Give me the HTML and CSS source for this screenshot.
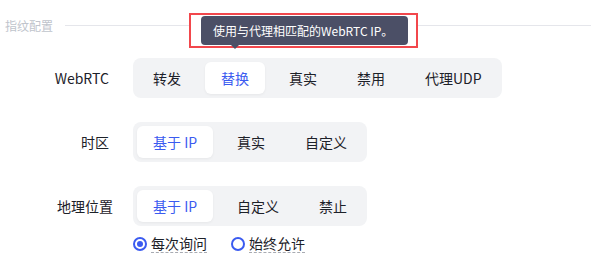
FILE: index.html
```html
<!DOCTYPE html>
<html lang="zh-CN">
<head>
    <meta charset="UTF-8">
    <title>指纹配置</title>
    <link rel="stylesheet" href="styles.css">
</head>
<body>
    <div class="page">
        <div class="section-title">
            <span>指纹配置</span>
            <i class="rule"></i>
        </div>

        <div class="form">
            <div class="row">
                <div class="label">WebRTC</div>
                <div class="seg">
                    <div class="seg-item">转发</div>
                    <div class="seg-item active">替换</div>
                    <div class="seg-item">真实</div>
                    <div class="seg-item">禁用</div>
                    <div class="seg-item">代理UDP</div>
                </div>
            </div>

            <div class="row">
                <div class="label">时区</div>
                <div class="seg">
                    <div class="seg-item active">基于 IP</div>
                    <div class="seg-item">真实</div>
                    <div class="seg-item">自定义</div>
                </div>
            </div>

            <div class="row">
                <div class="label label-wide">地理位置</div>
                <div class="seg">
                    <div class="seg-item active">基于 IP</div>
                    <div class="seg-item">自定义</div>
                    <div class="seg-item">禁止</div>
                </div>
            </div>

            <div class="row row-radio">
                <div class="label"></div>
                <div class="radios">
                    <label class="radio checked"><i class="dot"></i><span>每次询问</span></label>
                    <label class="radio"><i class="dot"></i><span>始终允许</span></label>
                </div>
            </div>
        </div>

        <!-- highlighted tooltip over the WebRTC option -->
        <div class="highlight"></div>
        <div class="tooltip">使用与代理相匹配的WebRTC IP。</div>
    </div>
</body>
</html>
```

FILE: styles.css
```css
* {
    box-sizing: border-box;
}

body {
    margin: 0;
    background: #fff;
    font-family: "Noto Sans CJK SC", "Noto Sans", sans-serif;
    color: #1d2129;
}

.page {
    position: relative;
    width: 591px;
    height: 267px;
    overflow: hidden;
}

.section-title {
    display: flex;
    align-items: center;
    gap: 12px;
    margin-top: 16px;
    padding-left: 5px;
    height: 18px;
    font-size: 12px;
    color: #c0c4cc;
}

.rule {
    flex: 1;
    height: 1px;
    background: #e5e6eb;
}

.form {
    display: flex;
    flex-direction: column;
    gap: 24px;
    margin-top: 24px;
}

.row {
    display: flex;
    align-items: center;
    gap: 24px;
}

.label {
    width: 109px;
    text-align: right;
    font-size: 14px;
    line-height: 20px;
}

.label-wide {
    width: 113px;
    margin-right: -4px;
}

.seg {
    display: flex;
    gap: 8px;
    padding: 4px;
    background: #f2f3f5;
    border-radius: 8px;
}

.seg-item {
    min-width: 60px;
    height: 32px;
    padding: 0 16px;
    line-height: 32px;
    font-size: 14px;
    text-align: center;
    border-radius: 6px;
    color: #1d2129;
}

.seg-item.active {
    background: #fff;
    color: #3b5bf0;
    box-shadow: 0 1px 3px rgba(0, 0, 0, 0.05);
}

.row-radio {
    margin-top: -16px;
}

.radios {
    display: flex;
    gap: 24px;
}

.radio {
    display: flex;
    align-items: center;
    gap: 4px;
    font-size: 14px;
}

.radio span {
    display: inline-block;
    line-height: 18px;
    border-bottom: 1px dashed #a8abb2;
}

.dot {
    width: 14px;
    height: 14px;
    border: 2px solid #3b5bf0;
    border-radius: 50%;
    position: relative;
}

.radio.checked .dot::after {
    content: "";
    position: absolute;
    left: 2px;
    top: 2px;
    width: 6px;
    height: 6px;
    border-radius: 50%;
    background: #3b5bf0;
}

.highlight {
    position: absolute;
    left: 189px;
    top: 13px;
    width: 229px;
    height: 35px;
    background: #fff;
    border: 2px solid #f2474c;
}

.tooltip {
    position: absolute;
    left: 201px;
    top: 16px;
    width: 207px;
    height: 29px;
    padding: 0 12px;
    line-height: 29px;
    font-size: 12px;
    color: #fff;
    background: #4b4f66;
    border-radius: 4px;
    white-space: nowrap;
}

.tooltip::after {
    content: "";
    position: absolute;
    left: 30px;
    top: 29px;
    border: 4px solid transparent;
    border-top-color: #4b4f66;
}
```
